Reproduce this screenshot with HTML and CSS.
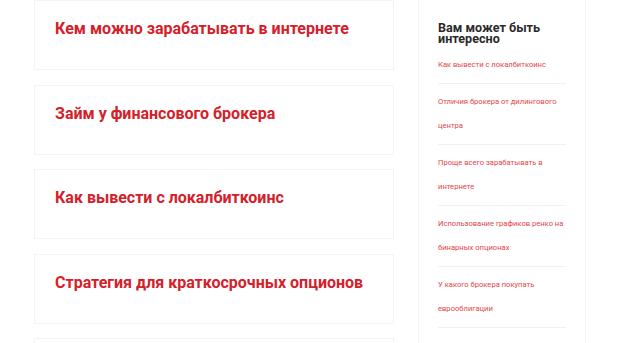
FILE: index.html
```html
<!DOCTYPE html>
<html lang="ru">

<head>
    <meta charset="UTF-8">
    <meta name="viewport" content="width=device-width, initial-scale=1.0">
    <title>Статьи</title>
    <link rel="stylesheet" href="styles.css">
</head>

<body>
    <div class="page">
        <main class="posts">
            <article class="post"><h2><a href="#">Кем можно зарабатывать в интернете</a></h2></article>
            <article class="post"><h2><a href="#">Займ у финансового брокера</a></h2></article>
            <article class="post"><h2><a href="#">Как вывести с локалбиткоинс</a></h2></article>
            <article class="post"><h2><a href="#">Стратегия для краткосрочных опционов</a></h2></article>
            <article class="post"><h2><a href="#">Как торговать на бирже</a></h2></article>
        </main>

        <aside class="sidebar">
            <h3>Вам может быть интересно</h3>
            <ul class="related">
                <li><a href="#">Как вывести с локалбиткоинс</a></li>
                <li><a href="#">Отличия брокера от дилингового центра</a></li>
                <li><a href="#">Проще всего зарабатывать в интернете</a></li>
                <li><a href="#">Использование графиков ренко на бинарных опционах</a></li>
                <li><a href="#">У какого брокера покупать еврооблигации</a></li>
                <li><a href="#">Ethereum</a></li>
            </ul>
        </aside>
    </div>
</body>

</html>
```

FILE: styles.css
```css
* {
    margin: 0;
    padding: 0;
    box-sizing: border-box;
    font-family: Roboto, Arial, Helvetica, sans-serif;
}

body {
    background-color: #fff;
    overflow: hidden;
}

a {
    text-decoration: none;
}

.page {
    display: flex;
    gap: 24px;
    padding-left: 34px;
}

.posts {
    width: 360px;
}

.post {
    height: 70px;
    margin-bottom: 14.5px;
    padding: 16px 20px;
    border: 1px solid #f3f3f3;
}

.post h2 {
    font-size: 16px;
    font-weight: 700;
    line-height: 24px;
}

.post h2 a {
    color: #d5202a;
}

.sidebar {
    width: 168px;
    margin-top: -2px;
    padding: 22.5px 19px 0;
    border: 1px solid #f3f3f3;
    height: 400px;
}

.sidebar h3 {
    font-size: 12.6px;
    font-weight: 700;
    line-height: 11.5px;
    color: #2a2a2a;
    margin-bottom: 2.5px;
}

.related {
    list-style: none;
}

.related li {
    padding: 6px 0 5px;
    border-bottom: 1px solid #f1f1f1;
    font-size: 7.6px;
    line-height: 24.5px;
}

.related a {
    color: #e2454a;
}
```
